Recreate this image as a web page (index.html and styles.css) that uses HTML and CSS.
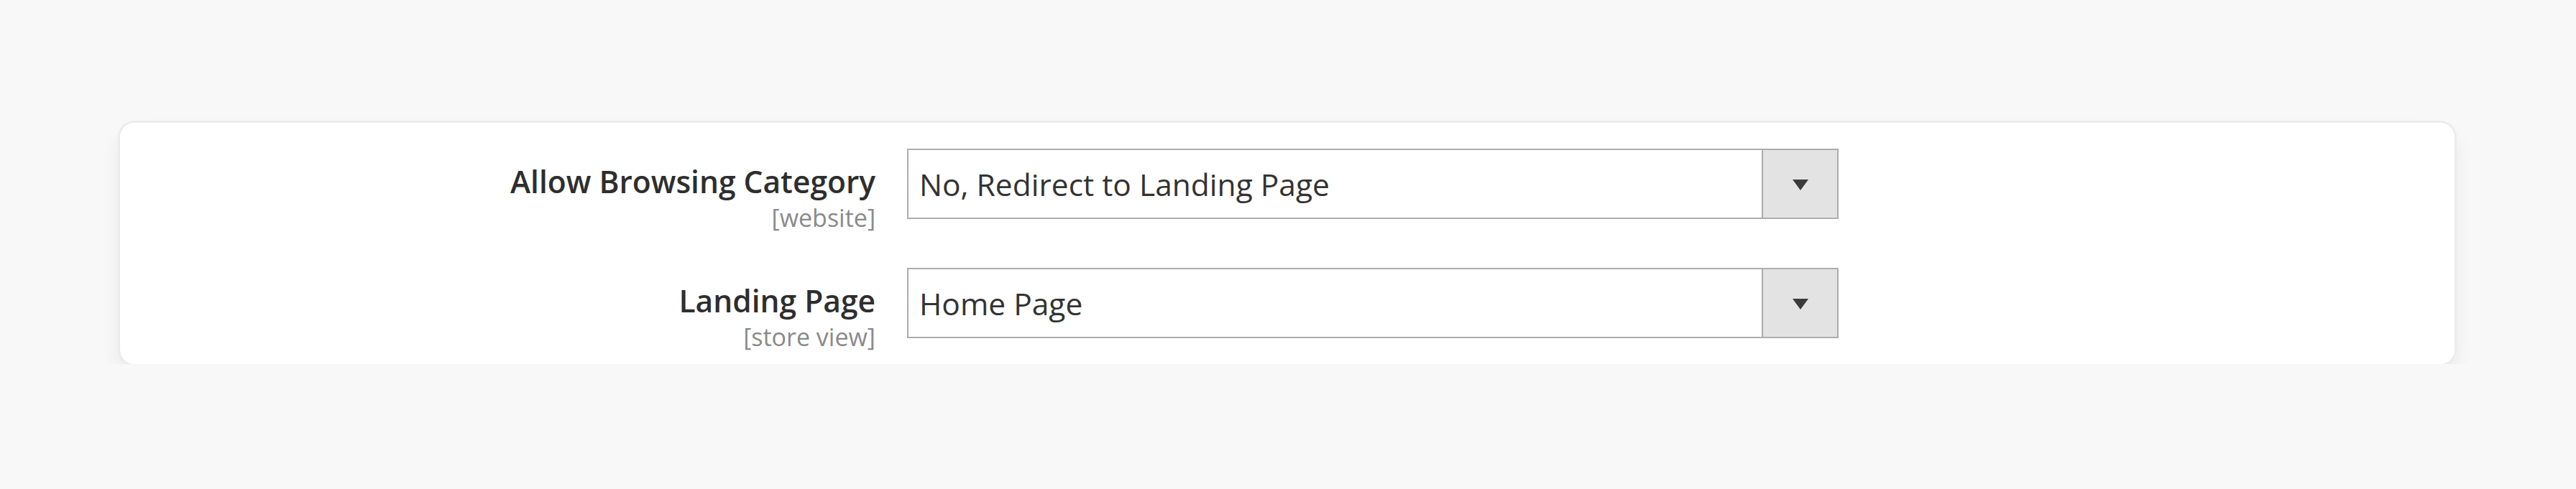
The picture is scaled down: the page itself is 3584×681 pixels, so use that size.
FILE: index.html
```html
<!DOCTYPE html>
<html lang="en">
  <head>
    <title>Category Permissions</title>
    <meta charset="utf-8">
    <link rel="stylesheet" href="styles.css">
  </head>
  <body>
    <div class="config-card">
      <div class="field-row">
        <div class="field-label">
          <span class="label-text">Allow Browsing Category</span>
          <span class="scope">[website]</span>
        </div>
        <div class="select-box">
          <span class="select-value">No, Redirect to Landing Page</span>
          <span class="select-btn"><span class="arrow"></span></span>
        </div>
      </div>
      <div class="field-row">
        <div class="field-label">
          <span class="label-text">Landing Page</span>
          <span class="scope">[store view]</span>
        </div>
        <div class="select-box">
          <span class="select-value">Home Page</span>
          <span class="select-btn"><span class="arrow"></span></span>
        </div>
      </div>
    </div>
  </body>
</html>
```

FILE: styles.css
```css
body {
  margin: 0;
  background-color: #f8f8f8;
  font-family: "Open Sans", "Liberation Sans", sans-serif;
  color: #303030;
}

.config-card {
  box-sizing: border-box;
  margin: 171px 0 0 167px;
  width: 3248px;
  height: 336px;
  padding-top: 36px;
  background: #fff;
  border-radius: 20px;
  box-shadow: 0 0 0 3px #ececec, 0 16px 28px rgba(0, 0, 0, 0.07);
  display: flex;
  flex-direction: column;
  gap: 47px;
}

.field-row {
  display: grid;
  grid-template-columns: 1051px 1296px;
  column-gap: 44px;
  align-items: start;
}

.field-label {
  display: flex;
  flex-direction: column;
  align-items: flex-end;
  padding-top: 17px;
}

.label-text {
  font-size: 42.5px;
  font-weight: 600;
  line-height: 58px;
  color: #2e2e2e;
}

.scope {
  font-size: 34px;
  line-height: 46px;
  margin-top: -2px;
  color: #8a8a8a;
}

.select-box {
  box-sizing: border-box;
  height: 98px;
  border: 2px solid #adadad;
  display: flex;
  align-items: stretch;
  background: #fff;
}

.select-value {
  flex: 1;
  display: flex;
  align-items: center;
  padding-left: 15px;
  font-size: 42.5px;
  color: #333;
}

.select-btn {
  width: 103px;
  background: #e3e3e3;
  border-left: 2px solid #adadad;
  display: flex;
  align-items: center;
  justify-content: center;
}

.arrow {
  width: 0;
  height: 0;
  border-left: 11px solid transparent;
  border-right: 11px solid transparent;
  border-top: 15px solid #3b3b3b;
  margin-top: 3px;
}
```
